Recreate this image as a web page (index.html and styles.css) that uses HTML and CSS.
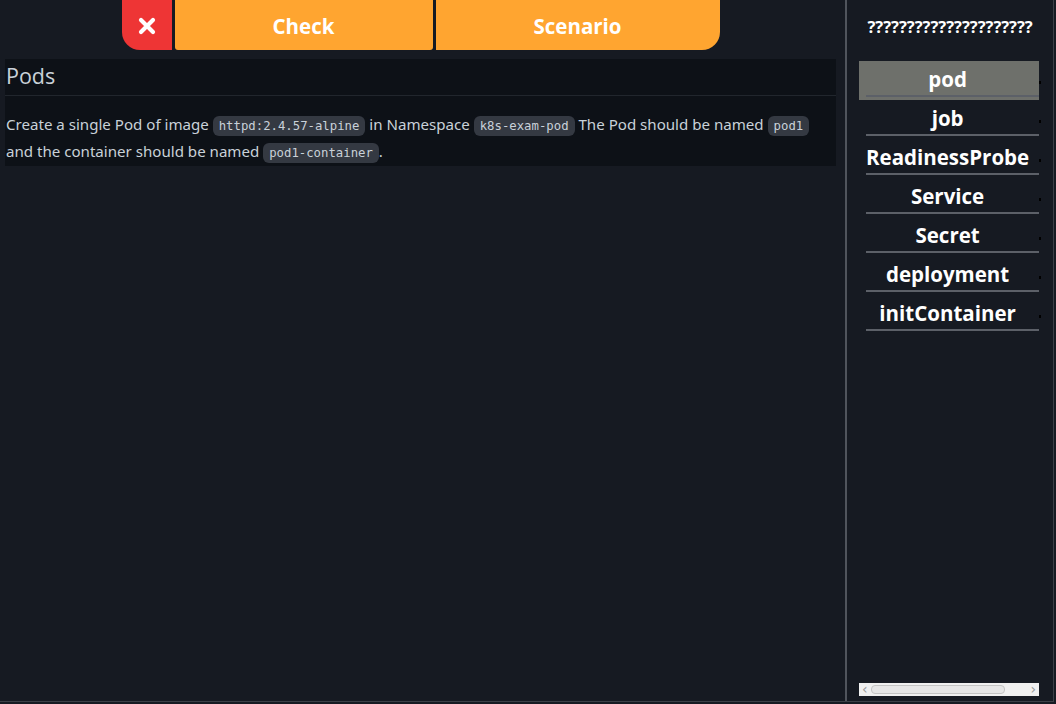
FILE: index.html
```html
<!DOCTYPE html>
<html>
<head>
<meta charset="utf-8">
<link rel="stylesheet" href="styles.css">
</head>
<body>
<div class="frame">
  <main class="main">
    <div class="toolbar">
      <button class="btn btn-close" aria-label="close">
        <svg width="20" height="20" viewBox="0 0 20 20"><path d="M4 4 L16 16 M16 4 L4 16" stroke="#fff" stroke-width="4.2" stroke-linecap="round"/></svg>
      </button>
      <button class="btn btn-check">Check</button>
      <button class="btn btn-scenario">Scenario</button>
    </div>
    <section class="panel">
      <h2 class="panel-title">Pods</h2>
      <p class="panel-text">Create a single Pod of image <code>httpd:2.4.57-alpine</code> in Namespace <code>k8s-exam-pod</code> The Pod should be named <code>pod1</code> and the container should be named <code>pod1-container</code>.</p>
    </section>
  </main>
  <aside class="side">
    <div class="side-title">?????????????????????</div>
    <ul class="menu">
      <li class="item active"><span class="label">pod</span></li>
      <li class="item"><span class="label">job</span></li>
      <li class="item"><span class="label">ReadinessProbe</span></li>
      <li class="item"><span class="label">Service</span></li>
      <li class="item"><span class="label">Secret</span></li>
      <li class="item"><span class="label">deployment</span></li>
      <li class="item"><span class="label">initContainer</span></li>
    </ul>
    <div class="scrollbar">
      <span class="arrow">&#8249;</span>
      <span class="thumb"></span>
      <span class="arrow">&#8250;</span>
    </div>
  </aside>
</div>
</body>
</html>
```
FILE: styles.css
```css
html, body {
  margin: 0;
  padding: 0;
  background: #161a22;
  height: 100%;
  overflow: hidden;
}
.frame {
  display: flex;
  width: 1053px;
  height: 701px;
  border-right: 1px solid #3c4047;
  border-bottom: 1px solid #3c4047;
  font-family: "Open Sans", "Noto Sans", sans-serif;
}
.main {
  width: 845px;
  flex: none;
  display: flex;
  flex-direction: column;
}
.toolbar {
  display: flex;
  justify-content: center;
  gap: 3px;
  height: 50px;
  padding-right: 4px;
}
.btn {
  border: none;
  margin: 0;
  padding: 2px 0 0;
  color: #fff;
  font-family: "Open Sans", sans-serif;
  font-weight: 700;
  font-size: 20.5px;
  height: 50px;
  cursor: pointer;
  display: flex;
  align-items: center;
  justify-content: center;
}
.btn-close {
  width: 50px;
  background: #ee3535;
  border-bottom-left-radius: 18px;
}
.btn-check {
  width: 258px;
  background: #ffa530;
  border-radius: 0 0 3px 3px;
}
.btn-scenario {
  width: 284px;
  background: #ffa530;
  border-bottom-right-radius: 18px;
}
.panel {
  margin: 9px 9px 0 5px;
  background: #0d1117;
  color: #c9d1d9;
}
.panel-title {
  margin: 0;
  height: 37px;
  box-sizing: border-box;
  padding: 1px 0 0 1px;
  font-weight: 400;
  font-size: 21.5px;
  line-height: 32px;
  border-bottom: 1px solid #21262d;
}
.panel-text {
  margin: 0;
  padding: 16px 0 0 1px;
  font-family: "Noto Sans", sans-serif;
  font-size: 15.1px;
  line-height: 25px;
}
.panel-text code {
  font-family: "DejaVu Sans Mono", monospace;
  font-size: 12.3px;
  background: #343942;
  border-radius: 6px;
  padding: 3px 6px;
  color: #c9d1d9;
}
.side {
  flex: 1;
  border-left: 2px solid #50545c;
  display: flex;
  flex-direction: column;
  padding: 0 14px 0 12px;
  position: relative;
}
.side-title {
  color: #fff;
  font-weight: 700;
  font-size: 16.5px;
  text-align: center;
  height: 61px;
  line-height: 54px;
  padding-left: 2px;
}
.menu {
  list-style: none;
  margin: 0;
  padding: 0;
  flex: 1;
}
.item {
  height: 39px;
  box-sizing: border-box;
  padding-left: 7px;
  position: relative;
}
.item.active {
  background: #6e706b;
}
.label {
  display: block;
  height: 36px;
  box-sizing: border-box;
  border-bottom: 2px solid #5c6068;
  color: #fff;
  font-weight: 700;
  font-size: 20.5px;
  line-height: 37px;
  text-align: center;
  padding-right: 10px;
}
.item::after {
  content: "";
  position: absolute;
  right: -2px;
  top: 20px;
  width: 2px;
  height: 3px;
  background: #000;
}
.scrollbar {
  height: 13px;
  margin-bottom: 5px;
  background: #f0f0f0;
  display: flex;
  align-items: center;
  gap: 3px;
  padding: 0 3px;
}
.arrow {
  color: #9a9a9a;
  font-size: 14px;
  line-height: 13px;
  font-family: "DejaVu Sans", sans-serif;
}
.thumb {
  width: 134px;
  height: 9px;
  box-sizing: border-box;
  border: 1px solid #c4c4c4;
  border-radius: 4px;
  background: #e6e6e6;
  margin-right: auto;
}
```
